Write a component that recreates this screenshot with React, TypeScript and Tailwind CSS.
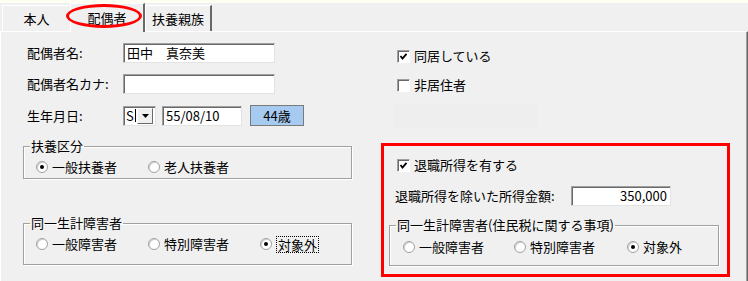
import type { ReactNode } from "react";

const FONT = { fontFamily: '"Noto Sans CJK JP", "Liberation Sans", sans-serif' };

function Field({ className, children }: { className: string; children?: ReactNode }) {
  return (
    <div
      className={`flex h-[20px] items-center border border-t-[#a0a0a0] border-l-[#a0a0a0] border-r-[#e3e3e3] border-b-[#e3e3e3] bg-white px-[3px] shadow-[inset_1px_1px_0_#696969] ${className}`}
    >
      {children}
    </div>
  );
}

function Check({ checked, label }: { checked?: boolean; label: string }) {
  return (
    <div className="flex h-[16px] items-center gap-[4px]">
      <span className="flex h-[13px] w-[13px] items-center justify-center border border-t-[#a0a0a0] border-l-[#a0a0a0] border-r-white border-b-white bg-white shadow-[inset_1px_1px_0_#696969]">
        {checked && (
          <svg width="9" height="9" viewBox="0 0 9 9">
            <path d="M1.5 4 L3.5 6.5 L7.5 1.8" fill="none" stroke="#000" strokeWidth="1.8" />
          </svg>
        )}
      </span>
      <span>{label}</span>
    </div>
  );
}

function Radio({ on, label, focus, className }: { on?: boolean; label: string; focus?: boolean; className: string }) {
  return (
    <div className={`flex h-[16px] items-center gap-[4px] ${className}`}>
      <span className="flex h-[12px] w-[12px] items-center justify-center rounded-full border border-[#a0a0a0] bg-white shadow-[inset_1px_1px_0_#d0d0d0]">
        {on && <span className="h-[4px] w-[4px] rounded-full bg-black" />}
      </span>
      <span className={focus ? "border border-dotted border-black px-px leading-[15px]" : ""}>{label}</span>
    </div>
  );
}

function Group({ title, className, children }: { title: string; className: string; children: ReactNode }) {
  return (
    <fieldset className={`border border-[#a0a0a0] p-0 shadow-[inset_1px_1px_0_#fff,1px_1px_0_#fff] ${className}`}>
      <legend className="ml-[6px] px-px leading-[14px]">{title}</legend>
      {children}
    </fieldset>
  );
}

export default function App() {
  return (
    <div
      className="flex h-[281px] w-[748px] flex-col overflow-hidden bg-[#f0f0f0] text-[13px] text-black"
      style={FONT}
    >
      <div className="h-[3px] bg-[#fefef2]" />

      {/* tabs */}
      <div className="relative flex h-[28px] items-end pl-[2px]">
        <div className="flex h-[26px] w-[68px] items-center justify-center border-l border-t border-white">
          本人
        </div>
        <div className="relative z-10 -mb-px flex h-[29px] w-[75px] items-center justify-center border-l border-t border-white border-r-2 border-r-[#696969] bg-[#f0f0f0] pb-px">
          配偶者
        </div>
        <div className="flex h-[26px] w-[67px] items-center justify-center border-l border-t border-white border-r-2 border-r-[#696969]">
          扶養親族
        </div>
        <div className="pointer-events-none absolute left-[66px] top-[1px] z-20 h-[24px] w-[76px] rounded-[50%] border-[3px] border-[#ff0000]" />
      </div>

      {/* panel */}
      <div className="flex flex-1 border-l border-t border-white border-r border-r-[#696969] shadow-[inset_-1px_0_0_#a0a0a0]">
        {/* left */}
        <div className="flex w-[369px] flex-col pl-[22px] pt-[11px]">
          <div className="flex flex-col gap-[11px] pl-[4px]">
            <div className="flex h-[20px] items-center">
              <span className="w-[96px]">配偶者名:</span>
              <Field className="w-[152px]">田中　真奈美</Field>
            </div>
            <div className="flex h-[20px] items-center">
              <span className="w-[96px]">配偶者名カナ:</span>
              <Field className="w-[152px]" />
            </div>
            <div className="flex h-[21px] items-center">
              <span className="w-[96px]">生年月日:</span>
              <Field className="w-[33px] justify-between !px-[2px]">
                <span className="flex items-center">
                  S<span className="ml-px h-[13px] w-px bg-black" />
                </span>
                <span className="flex h-[16px] w-[16px] items-center justify-center border border-t-white border-l-white border-r-[#696969] border-b-[#696969] bg-[#f0f0f0]">
                  <svg width="7" height="4" viewBox="0 0 7 4">
                    <path d="M0 0 H7 L3.5 4 Z" fill="#000" />
                  </svg>
                </span>
              </Field>
              <Field className="ml-[6px] w-[80px]">55/08/10</Field>
              <div className="ml-[8px] flex h-[21px] w-[54px] items-center justify-center border border-[#7a7a7a] bg-[#a6caf0]">
                44歳
              </div>
            </div>
          </div>

          <Group title="扶養区分" className="mt-[13px] w-[329px]">
            <div className="flex pb-[3px] pl-[12px] pt-[6px]">
              <Radio on label="一般扶養者" className="w-[112px]" />
              <Radio label="老人扶養者" className="w-[112px]" />
            </div>
          </Group>

          <Group title="同一生計障害者" className="mt-[37px] w-[329px]">
            <div className="flex pb-[12px] pl-[12px] pt-[6px]">
              <Radio label="一般障害者" className="w-[112px]" />
              <Radio label="特別障害者" className="w-[112px]" />
              <Radio on focus label="対象外" className="w-[80px]" />
            </div>
          </Group>
        </div>

        {/* right */}
        <div className="flex flex-col pt-[16px]">
          <div className="flex flex-col gap-[13px] pl-[27px]">
            <Check checked label="同居している" />
            <Check label="非居住者" />
          </div>
          <div className="ml-[23px] mt-[10px] h-[25px] w-[144px] bg-[#eeeeee]" />

          <div className="ml-[11px] mt-[15px] flex h-[134px] w-[349px] flex-col border-[3px] border-[#ff0000] pt-[11px]">
            <div className="pl-[13px]">
              <Check checked label="退職所得を有する" />
            </div>
            <div className="mt-[13px] flex h-[20px] items-center pl-[11px]">
              <span className="w-[176px]">退職所得を除いた所得金額:</span>
              <Field className="w-[100px] justify-end">350,000</Field>
            </div>
            <Group title="同一生計障害者(住民税に関する事項)" className="ml-[5px] mt-[12px] w-[330px]">
              <div className="flex pb-[10px] pl-[13px] pt-[7px]">
                <Radio label="一般障害者" className="w-[111px]" />
                <Radio label="特別障害者" className="w-[113px]" />
                <Radio on label="対象外" className="w-[80px]" />
              </div>
            </Group>
          </div>
        </div>
      </div>
    </div>
  );
}
